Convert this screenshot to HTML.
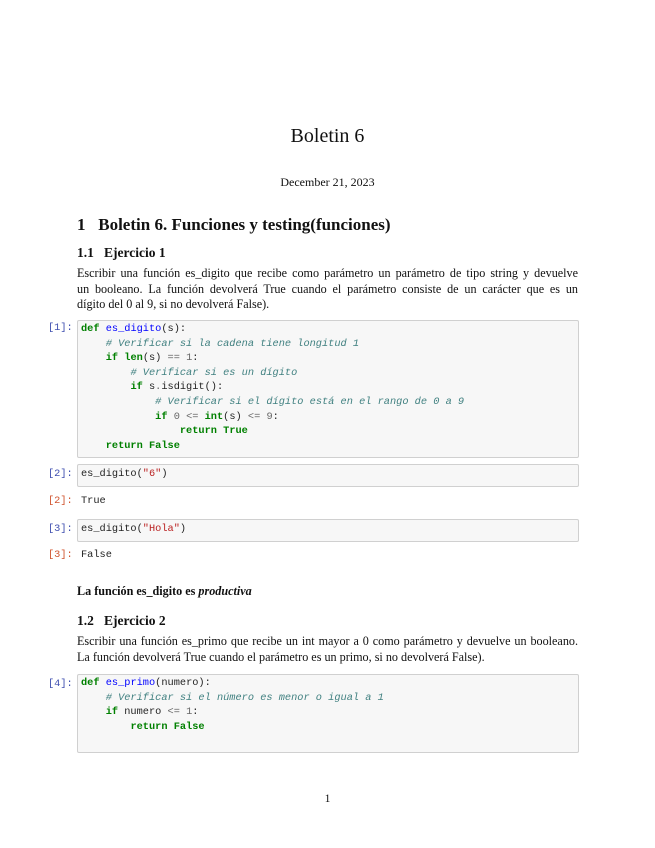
<!DOCTYPE html>
<html><head><meta charset="utf-8"><style>
body{margin:0;width:655px;height:848px;background:#fff;position:relative;font-family:"Liberation Serif",serif;color:#111;overflow:hidden}
.a{position:absolute;white-space:nowrap}
.p{position:absolute;left:77px;width:501px;font-size:12.15px;line-height:15.6px}
.p span{display:block;white-space:nowrap;text-align:justify;text-align-last:justify}
.p span.l{text-align-last:left}
.box{position:absolute;left:77px;width:500px;background:#f7f7f7;border:1px solid #d0d0d0;border-radius:2px}
.code{position:absolute;font-family:"Liberation Mono",monospace;font-size:10.3px;line-height:14.6px;white-space:pre;color:#222}
.pr{position:absolute;font-family:"Liberation Mono",monospace;font-size:10.3px;color:#3f4fb0}
.po{position:absolute;font-family:"Liberation Mono",monospace;font-size:10.3px;color:#d0542f}
.k{color:#008000;font-weight:bold}.f{color:#0000ff}.c{color:#408080;font-style:italic}.n{color:#666}.s{color:#ba2121}
</style></head><body>
<div class="a" style="left:0;width:655px;text-align:center;top:125px;font-size:20px">Boletin 6</div>
<div class="a" style="left:0;width:655px;text-align:center;top:175px;font-size:12px">December 21, 2023</div>
<div class="a" style="left:77px;top:215px;font-size:17px;font-weight:bold">1&nbsp;&nbsp;&nbsp;Boletin 6. Funciones y testing(funciones)</div>
<div class="a" style="left:77px;top:245px;font-size:13.5px;font-weight:bold">1.1&nbsp;&nbsp;&nbsp;Ejercicio 1</div>
<div class="p" style="top:266px"><span>Escribir una función es_digito que recibe como parámetro un parámetro de tipo string y devuelve</span><span>un booleano. La función devolverá True cuando el parámetro consiste de un carácter que es un</span><span class="l">dígito del 0 al 9, si no devolverá False).</span></div>
<div class="pr" style="left:48px;top:322px">[1]:</div>
<div class="box" style="top:320px;height:136px"></div>
<div class="code" style="left:81px;top:322px"><span class="k">def</span> <span class="f">es_digito</span>(s):
    <span class="c"># Verificar si la cadena tiene longitud 1</span>
    <span class="k">if</span> <span class="k">len</span>(s) <span class="n">==</span> <span class="n">1</span>:
        <span class="c"># Verificar si es un dígito</span>
        <span class="k">if</span> s<span class="n">.</span>isdigit():
            <span class="c"># Verificar si el dígito está en el rango de 0 a 9</span>
            <span class="k">if</span> <span class="n">0</span> <span class="n">&lt;=</span> <span class="k">int</span>(s) <span class="n">&lt;=</span> <span class="n">9</span>:
                <span class="k">return</span> <span class="k">True</span>
    <span class="k">return</span> <span class="k">False</span></div>
<div class="pr" style="left:48px;top:468px">[2]:</div>
<div class="box" style="top:464px;height:21px"></div>
<div class="code" style="left:81px;top:467px">es_digito(<span class="s">"6"</span>)</div>
<div class="po" style="left:48px;top:495px">[2]:</div>
<div class="code" style="left:81px;top:494px">True</div>
<div class="pr" style="left:48px;top:523px">[3]:</div>
<div class="box" style="top:519px;height:21px"></div>
<div class="code" style="left:81px;top:522px">es_digito(<span class="s">"Hola"</span>)</div>
<div class="po" style="left:48px;top:549px">[3]:</div>
<div class="code" style="left:81px;top:548px">False</div>
<div class="a" style="left:77px;top:584px;font-size:12.15px;font-weight:bold">La función es_digito es <i>productiva</i></div>
<div class="a" style="left:77px;top:613px;font-size:13.5px;font-weight:bold">1.2&nbsp;&nbsp;&nbsp;Ejercicio 2</div>
<div class="p" style="top:634px"><span>Escribir una función es_primo que recibe un int mayor a 0 como parámetro y devuelve un booleano.</span><span class="l">La función devolverá True cuando el parámetro es un primo, si no devolverá False).</span></div>
<div class="pr" style="left:48px;top:678px">[4]:</div>
<div class="box" style="top:674px;height:77px"></div>
<div class="code" style="left:81px;top:676px"><span class="k">def</span> <span class="f">es_primo</span>(numero):
    <span class="c"># Verificar si el número es menor o igual a 1</span>
    <span class="k">if</span> numero <span class="n">&lt;=</span> <span class="n">1</span>:
        <span class="k">return</span> <span class="k">False</span></div>
<div class="a" style="left:0;width:655px;text-align:center;top:792px;font-size:11.6px">1</div>
</body></html>
